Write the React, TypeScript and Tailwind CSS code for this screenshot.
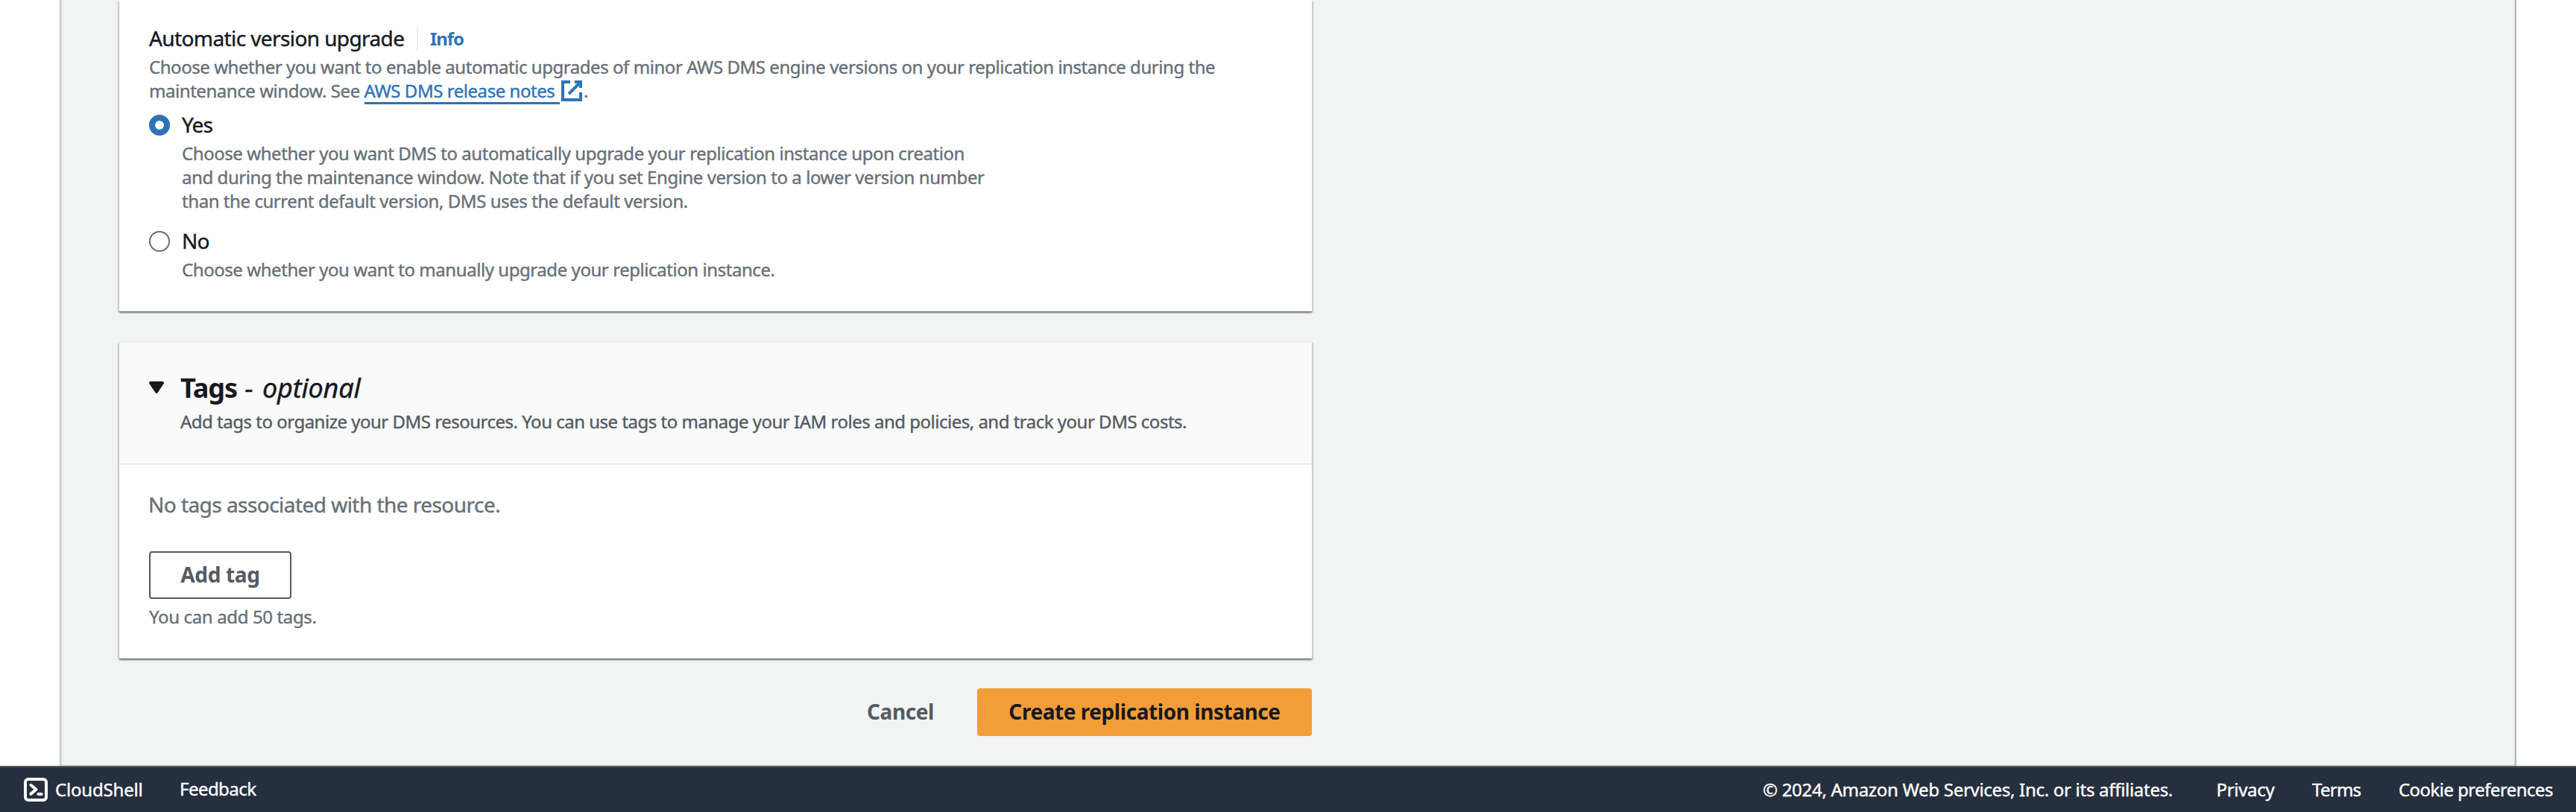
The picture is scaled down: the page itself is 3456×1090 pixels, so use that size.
import React from 'react';

function ExternalIcon() {
  return (
    <svg viewBox="0 0 16 16" className="size-8 shrink-0" fill="none" stroke="#2e73b8" strokeWidth="2">
      <path d="M10 2h4v4" />
      <path d="m6 10 8-8" />
      <path d="M14 9.048V14H2V2h5" />
    </svg>
  );
}

function CaretDownIcon() {
  return (
    <svg viewBox="0 0 16 16" className="size-8" fill="#16191f" stroke="#16191f" strokeWidth="2" strokeLinejoin="round">
      <path d="M4 5h8l-4 6-4-6z" />
    </svg>
  );
}

function CloudShellIcon() {
  return (
    <svg viewBox="0 0 32 32" className="size-8" fill="none" stroke="#ffffff" strokeWidth="4" strokeLinecap="round" strokeLinejoin="round">
      <rect x="2" y="2" width="28" height="28" rx="4" />
      <path d="m9.4 9.8 7.1 5.9-7.1 5.9" />
      <path d="M19.4 21.9h4.2" />
    </svg>
  );
}

interface RadioOptionProps {
  label: string;
  checked?: boolean;
  lines: string[];
}

function RadioOption({ label, checked = false, lines }: RadioOptionProps) {
  return (
    <div className="flex">
      <span
        className={
          checked
            ? 'mt-[9px] size-7 shrink-0 rounded-full border-8 border-[#2e73b8] bg-white'
            : 'mt-[9px] size-7 shrink-0 rounded-full border-2 border-[#687078] bg-white'
        }
      />
      <div className="ml-4">
        <div className="h-[45px] text-[28px] leading-[44px] tracking-[-0.9px] text-[#16191f]">{label}</div>
        <div className="text-[24px] leading-8 tracking-[-0.435px] text-[#687078]">
          {lines.map((line) => (
            <div key={line}>{line}</div>
          ))}
        </div>
      </div>
    </div>
  );
}

const cardShadow =
  'shadow-[0_2px_2px_0_rgba(0,28,36,0.3),2px_2px_2px_0_rgba(0,28,36,0.15),-2px_2px_2px_0_rgba(0,28,36,0.15),0_1px_0_0_rgba(0,28,36,0.3)]';

export default function App() {
  return (
    <div className="flex h-[1090px] w-[3456px] flex-col overflow-hidden bg-white font-['Noto_Sans',sans-serif] whitespace-nowrap [-webkit-text-stroke:0.4px]">
      <main className="-mt-2 ml-20 h-[1036px] w-[3296px] border-l border-[#b9c0c2] bg-[#f2f3f3] pt-2 pl-[79px] shadow-[inset_2px_0_2px_0_rgba(0,28,36,0.12),inset_-2px_0_2px_0_rgba(0,28,36,0.3)]">
        <div className="w-[1600px]">
          <section className={`h-[418px] bg-white pt-[29px] pl-10 ${cardShadow}`}>
            <div className="flex h-[45px]">
              <h3 className="w-[359px] text-[28px] leading-[44px] tracking-[-0.6px] text-[#16191f]">Automatic version upgrade</h3>
              <a className="mt-1.5 h-8 border-l-2 border-[#eaeded] pl-4 text-[24px] leading-[34px] font-bold tracking-[-1.1px] text-[#2e73b8] [-webkit-text-stroke:0]">
                Info
              </a>
            </div>
            <div className="text-[24px] leading-8 tracking-[-0.45px] text-[#687078]">
              <p>
                Choose whether you want to enable automatic upgrades of minor AWS DMS engine versions on your replication instance
                during the
              </p>
              <p className="flex h-8">
                <span className="w-[288.5px]">maintenance window. See</span>
                <a className="h-[34px] w-[262.5px] border-b-[3px] border-[#2e73b8] text-[#2e73b8]">AWS DMS release notes</a>
                <ExternalIcon />
                <span>.</span>
              </p>
            </div>
            <div className="mt-[7px] flex flex-col gap-[15px]">
              <RadioOption
                label="Yes"
                checked
                lines={[
                  'Choose whether you want DMS to automatically upgrade your replication instance upon creation',
                  'and during the maintenance window. Note that if you set Engine version to a lower version number',
                  'than the current default version, DMS uses the default version.',
                ]}
              />
              <RadioOption label="No" lines={['Choose whether you want to manually upgrade your replication instance.']} />
            </div>
          </section>

          <section className={`mt-10 h-[426px] bg-white ${cardShadow}`}>
            <header className="flex h-[166px] border-y-2 border-[#eaeded] bg-[#fafafa] pt-[37px] pl-[34px]">
              <span className="mt-[7px]">
                <CaretDownIcon />
              </span>
              <div className="ml-4">
                <h2 className="flex h-[53px] pt-0.5 text-[36px] leading-[44px] text-[#16191f]">
                  <span className="w-[86px] font-bold tracking-[-1.05px] [-webkit-text-stroke:0]">Tags</span>
                  <span className="w-6">-</span>
                  <em className="tracking-[-0.2px]">optional</em>
                </h2>
                <p className="text-[24px] leading-8 tracking-[-0.496px] text-[#545b64]">
                  Add tags to organize your DMS resources. You can use tags to manage your IAM roles and policies, and track your DMS
                  costs.
                </p>
              </div>
            </header>
            <div className="flex flex-col items-start pt-[31px] pl-10">
              <p className="-ml-px text-[28px] leading-[44px] tracking-[-0.54px] text-[#687078]">No tags associated with the resource.</p>
              <button className="mt-[41px] h-16 w-[191px] rounded-[4px] border-2 border-[#545b64] pb-0.5 text-[28px] font-bold tracking-[-0.33px] text-[#545b64] [-webkit-text-stroke:0]">
                Add tag
              </button>
              <p className="mt-2 text-[24px] leading-8 tracking-[-0.36px] text-[#687078]">You can add 50 tags.</p>
            </div>
          </section>

          <div className="mt-10 flex justify-end [-webkit-text-stroke:0]">
            <button className="mr-[58px] h-16 pb-0.5 text-[28px] font-bold tracking-[-0.42px] text-[#545b64]">Cancel</button>
            <button className="h-16 w-[449px] rounded-[4px] bg-[#f29d38] pb-0.5 text-[28px] font-bold tracking-[-0.445px] text-[#16191f]">
              Create replication instance
            </button>
          </div>
        </div>
      </main>

      <footer className="flex h-[62px] items-center border-t-2 border-[#545b64] bg-[#262f3e] pr-8 pl-8 text-[24px] leading-8 text-white">
        <CloudShellIcon />
        <span className="ml-2.5 w-[167px] tracking-[-0.18px]">CloudShell</span>
        <span className="-mt-0.5 tracking-[-0.55px]">Feedback</span>
        <span className="ml-auto w-[608.5px] tracking-[-0.29px]">© 2024, Amazon Web Services, Inc. or its affiliates.</span>
        <span className="w-[128.5px] tracking-[-0.3px]">Privacy</span>
        <span className="w-[116px] tracking-[-0.74px]">Terms</span>
        <span className="w-[206px] tracking-[-0.55px]">Cookie preferences</span>
      </footer>
    </div>
  );
}
